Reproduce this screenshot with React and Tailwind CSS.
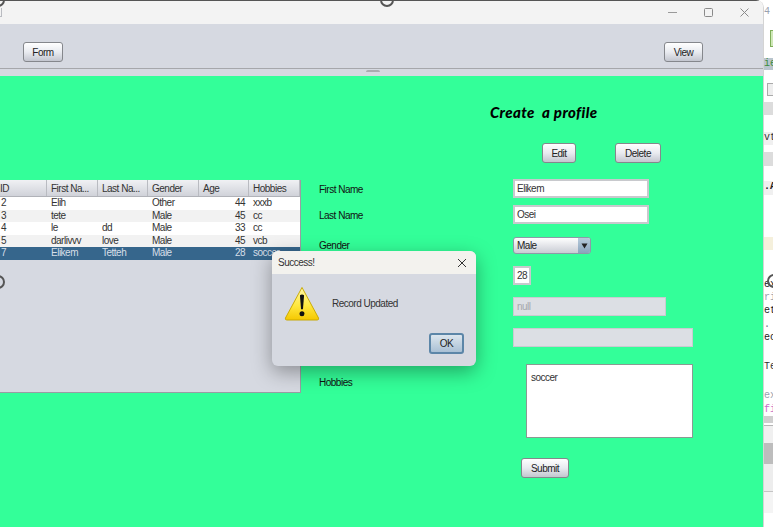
// App.jsx — Swing profile form with "Record Updated" dialog
import React from 'react';

const columns = [
  { label: 'ID', w: 'w-[47px]' },
  { label: 'First Na...', w: 'w-[51px]' },
  { label: 'Last Na...', w: 'w-[50px]' },
  { label: 'Gender', w: 'w-[51px]' },
  { label: 'Age', w: 'w-[50px]' },
  { label: 'Hobbies', w: 'w-[51px]' },
];

const rows = [
  ['2', 'Elih', '', 'Other', '44', 'xxxb'],
  ['3', 'tete', '', 'Male', '45', 'cc'],
  ['4', 'le', 'dd', 'Male', '33', 'cc'],
  ['5', 'darlivvv', 'love', 'Male', '45', 'vcb'],
  ['7', 'Elikem', 'Tetteh', 'Male', '28', 'soccer'],
];

const sideRows = [
  { h: 'h-[6px]' },
  { h: 'h-[12px]', text: '4', cls: 'text-gray-400' },
  { h: 'h-[12px]' },
  { h: 'h-[17px]', chip: true },
  { h: 'h-[11px]' },
  { h: 'h-[12px]', text: 'iew', cls: 'bg-[#b9c5cd] text-[#3c8c3c]' },
  { h: 'h-[13px]' },
  { h: 'h-[13px]', check: true },
  { h: 'h-[6px]' },
  { h: 'h-[13px]', cls: 'bg-[#dcdcdc]' },
  { h: 'h-[17px]' },
  { h: 'h-[13px]', text: 'vt', cls: 'bg-[#f0f0f0] text-[#333]' },
  { h: 'h-[7px]' },
  { h: 'h-[14px]', cls: 'bg-[#dcdcdc]' },
  { h: 'h-[15px]' },
  { h: 'h-[14px]', text: '.A', cls: 'bg-[#f0f0f0] text-[#222] font-bold' },
  { h: 'h-[42px]' },
  { h: 'h-[13px]', cls: 'bg-[#f5f0dc]' },
  { h: 'h-[29px]' },
  { h: 'h-[13px]', text: 'ex', cls: 'text-[#222]' },
  { h: 'h-[13px]', text: 'ri', cls: 'text-gray-400' },
  { h: 'h-[14px]', text: 'et', cls: 'text-[#222]' },
  { h: 'h-[13px]', text: '.', cls: 'text-gray-500' },
  { h: 'h-[14px]', text: 'ec', cls: 'text-[#222]' },
  { h: 'h-[15px]' },
  { h: 'h-[14px]', text: 'Te', cls: 'text-[#333]' },
  { h: 'h-[15px]' },
  { h: 'h-[14px]', text: 'ex', cls: 'text-gray-400' },
  { h: 'h-[12px]', text: 'fi', cls: 'text-[#c86ec8]' },
  { h: 'h-[7px]', cls: 'bg-[#cfcfcf]' },
  { h: 'h-[2px]' },
  { h: 'h-[18px]', cls: 'border-t border-[#b5b5b5] bg-[#f0f0f0]' },
  { h: 'h-[21px]', cls: 'bg-[#bdbdbd]' },
  { h: 'h-[27px]', cls: 'bg-[#ededed]' },
  { h: 'h-[22px]', cls: 'border-t border-[#c4c4c4] bg-[#f4f4f4]' },
];

function JButton({ children, className = '' }) {
  return (
    <div className={`flex items-center justify-center rounded-[3px] border border-[#85878c] bg-gradient-to-b from-white via-[#e9ebf0] to-[#c3c6cf] text-[10px] text-[#222] ${className}`}>
      {children}
    </div>
  );
}

function Handle({ className }) {
  return <div className={`absolute h-[14px] w-[14px] rounded-full border-[2.5px] border-[#555] ${className}`} />;
}

function WarningIcon() {
  return (
    <svg width="36" height="35" viewBox="0 0 38 36" preserveAspectRatio="none">
      <defs>
        <linearGradient id="warn" x1="0" y1="0" x2="0" y2="1">
          <stop offset="0" stopColor="#fff7a8" />
          <stop offset="0.55" stopColor="#ffe840" />
          <stop offset="1" stopColor="#f5c800" />
        </linearGradient>
      </defs>
      <path d="M19 1.5 L36.5 33 Q37 35 35 35 L3 35 Q1 35 1.5 33 Z" fill="url(#warn)" stroke="#c9a800" strokeWidth="1" strokeLinejoin="round" />
      <path d="M16.8 9.5 Q19 8 21.2 9.5 L20 24 L18 24 Z" fill="#111" />
      <circle cx="19" cy="28.5" r="2.6" fill="#111" />
    </svg>
  );
}

function Field({ children, className = '' }) {
  return (
    <div className={`flex items-center border-2 border-[#c8c9cd] bg-white px-[2px] text-[10px] text-[#333] ${className}`}>
      {children}
    </div>
  );
}

function FormRow({ label, className = '', labelClass = '', children }) {
  return (
    <div className={`flex ${className}`}>
      <div className={`w-[194px] shrink-0 text-[10px] leading-[13px] text-[#111] ${labelClass}`}>{label}</div>
      {children}
    </div>
  );
}

export default function App() {
  return (
    <div className="relative flex h-[527px] w-[773px] overflow-hidden bg-white font-['Liberation_Sans',sans-serif] tracking-[-0.5px]">
      {/* main window */}
      <div className="flex h-full w-[764px] shrink-0 flex-col overflow-hidden rounded-tr-lg border-r border-[#d4d4d4]">
        <div className="flex h-6 shrink-0 items-center justify-end gap-[25px] border-t border-[#555] bg-[#f3f3f3] pr-[13px]">
          <svg width="11" height="11" viewBox="0 0 11 11" stroke="#9a9a9a" fill="none"><path d="M1 5.5h9" /></svg>
          <svg width="11" height="11" viewBox="0 0 11 11" stroke="#8a8a8a" fill="none"><rect x="1.5" y="1.5" width="8" height="8" rx="1" /></svg>
          <svg width="11" height="11" viewBox="0 0 11 11" stroke="#8a8a8a" fill="none"><path d="M1.5 1.5l8 8M9.5 1.5l-8 8" /></svg>
        </div>
        <div className="flex h-[45px] shrink-0 items-end justify-between border-b border-[#a6a7ab] bg-[#d6d9e1] pb-[6px] pl-[23px] pr-[60px]">
          <JButton className="h-[20px] w-[40px]">Form</JButton>
          <JButton className="h-[20px] w-[39px]">View</JButton>
        </div>
        <div className="flex h-[7px] shrink-0 justify-center bg-[#d6d9e1]">
          <div className="mr-[18px] mt-[1px] h-[2px] w-[14px] rounded-t-sm bg-[#a9abb0]" />
        </div>
        <div className="flex min-h-0 flex-1 bg-[#33ff99]">
          {/* table panel */}
          <div className="mt-[104px] h-[213px] w-[301px] shrink-0 border-r border-b border-[#9a9ca3] bg-[#d6d9e1]">
            <div className="flex h-[17px] border-b border-[#b0b2b8] bg-gradient-to-b from-[#f0f1f4] to-[#d0d2d9]">
              {columns.map((c) => (
                <div key={c.label} className={`${c.w} flex items-center whitespace-nowrap border-r border-[#b9bbc1] pl-[4px] text-[10px] text-[#333] first:pl-0`}>
                  {c.label}
                </div>
              ))}
            </div>
            {rows.map((r, i) => {
              const selected = i === 4;
              return (
                <div key={r[0]} className={`flex h-[12.5px] items-center text-[10px] leading-[12px] ${selected ? 'bg-[#36668c] text-[#d6dfe8]' : i % 2 ? 'bg-[#f2f2f2] text-[#333]' : 'bg-white text-[#333]'}`}>
                  <div className="w-[47px] pl-[1px]">{r[0]}</div>
                  <div className="w-[51px] pl-[4px]">{r[1]}</div>
                  <div className="w-[50px] pl-[4px]">{r[2]}</div>
                  <div className="w-[51px] pl-[4px]">{r[3]}</div>
                  <div className="w-[50px] pr-[4px] text-right">{r[4]}</div>
                  <div className="w-[51px] overflow-hidden whitespace-nowrap pl-[4px]">{r[5]}</div>
                </div>
              );
            })}
          </div>

          {/* form */}
          <div className="flex flex-1 flex-col pl-[18px]">
            <h1 className="ml-[171px] mt-[28px] h-[17px] whitespace-pre font-['Lato',sans-serif] text-[15px] font-black italic leading-[17px] tracking-[0.4px] text-black">
              Create  a profile
            </h1>
            <div className="ml-[223px] mt-[22px] flex h-[19px] gap-[39px]">
              <JButton className="h-[20px] w-[34px]">Edit</JButton>
              <JButton className="h-[20px] w-[46px]">Delete</JButton>
            </div>
            <FormRow label="First Name" className="mt-[17px] items-center" labelClass="pt-[1px]">
              <Field className="h-[19px] w-[136px]">Elikem</Field>
            </FormRow>
            <FormRow label="Last Name" className="mt-[7px] items-center" labelClass="pt-[2px]">
              <Field className="h-[19px] w-[136px]">Osei</Field>
            </FormRow>
            <FormRow label="Gender" className="mt-[13px] items-start" labelClass="pt-[2px]">
              <div className="flex h-[17px] w-[78px] items-stretch overflow-hidden rounded-[3px] border border-[#8e99a8] bg-gradient-to-b from-white to-[#c9ccd4] text-[10px] text-[#222]">
                <div className="flex-1 pl-[3px] leading-[15px]">Male</div>
                <div className="flex w-[12px] items-center justify-center bg-gradient-to-b from-[#b8cbdc] to-[#8aa4bc]">
                  <svg width="7" height="6" viewBox="0 0 7 6"><path d="M0.5 0.5h6L3.5 5.5z" fill="#222" /></svg>
                </div>
              </div>
            </FormRow>
            <FormRow label="" className="mt-[12px]">
              <Field className="h-[19px] w-[18px]">28</Field>
            </FormRow>
            <FormRow label="" className="mt-[12px]">
              <div className="flex h-[19px] w-[153px] items-center border border-[#c9cbd0] bg-[#dcdfe4] pl-[3px] text-[10px] text-[#a6a8ad]">null</div>
            </FormRow>
            <FormRow label="" className="mt-[12px]">
              <div className="h-[19px] w-[180px] border border-[#c9cbd0] bg-[#dcdfe4]" />
            </FormRow>
            <FormRow label="Hobbies" className="mt-[17px]" labelClass="pt-[12px]">
              <div className="ml-[13px] h-[74px] w-[167px] border border-[#8a9a92] bg-white pl-[4px] pt-[6px] text-[10px] leading-[13px] text-[#333]">soccer</div>
            </FormRow>
            <JButton className="ml-[202px] mt-[20px] h-[20px] w-[48px]">Submit</JButton>
          </div>
        </div>
      </div>

      {/* IDE peeking out behind the window */}
      <div className="flex w-[9px] shrink-0 flex-col overflow-hidden bg-white font-['Liberation_Mono',monospace] text-[10px] leading-[12px] tracking-normal">
        {sideRows.map((r, i) => (
          <div key={i} className={`${r.h} shrink-0 overflow-hidden ${r.cls || ''}`}>
            {r.text}
            {r.chip && <div className="ml-[6px] h-full w-[4px] border border-[#7fae5a] bg-[#cfe8b8]" />}
            {r.check && <div className="ml-[3px] h-full w-[7px] border border-[#aaa] bg-[#eee]" />}
          </div>
        ))}
      </div>

      {/* screenshot selection handles */}
      <div className="absolute left-0 top-[8px] h-[9px] w-[2px] border-r border-b border-[#b9bbc1]" />
      <Handle className="left-[-9px] top-[-7px]" />
      <Handle className="left-[380px] top-[-7px]" />
      <Handle className="left-[-9px] top-[275px]" />
      <Handle className="left-[767px] top-[274px]" />

      {/* message dialog */}
      <div className="absolute left-[272px] top-[251px] flex h-[115px] w-[204px] flex-col overflow-hidden rounded-[6px] bg-[#d6d9e1] shadow-[0_6px_20px_rgba(0,0,0,0.35)]">
        <div className="flex h-[23px] shrink-0 items-center justify-between bg-[#f3f2ee] pl-[6px] pr-[9px] text-[10px] text-[#333]">
          <span>Success!</span>
          <svg width="10" height="10" viewBox="0 0 10 10" stroke="#333" fill="none"><path d="M1 1l8 8M9 1l-8 8" /></svg>
        </div>
        <div className="flex items-start pl-[12px] pt-[12px]">
          <WarningIcon />
          <div className="ml-[12px] mt-[11px] text-[10px] leading-[13px] text-[#333]">Record Updated</div>
        </div>
        <div className="mt-[12px] flex justify-end pr-[12px]">
          <div className="flex h-[21px] w-[35px] items-center justify-center rounded-[3px] border-2 border-[#5c86a8] bg-gradient-to-b from-[#dce6ee] to-[#a9c0d4] text-[10px] text-[#222]">OK</div>
        </div>
      </div>
    </div>
  );
}
